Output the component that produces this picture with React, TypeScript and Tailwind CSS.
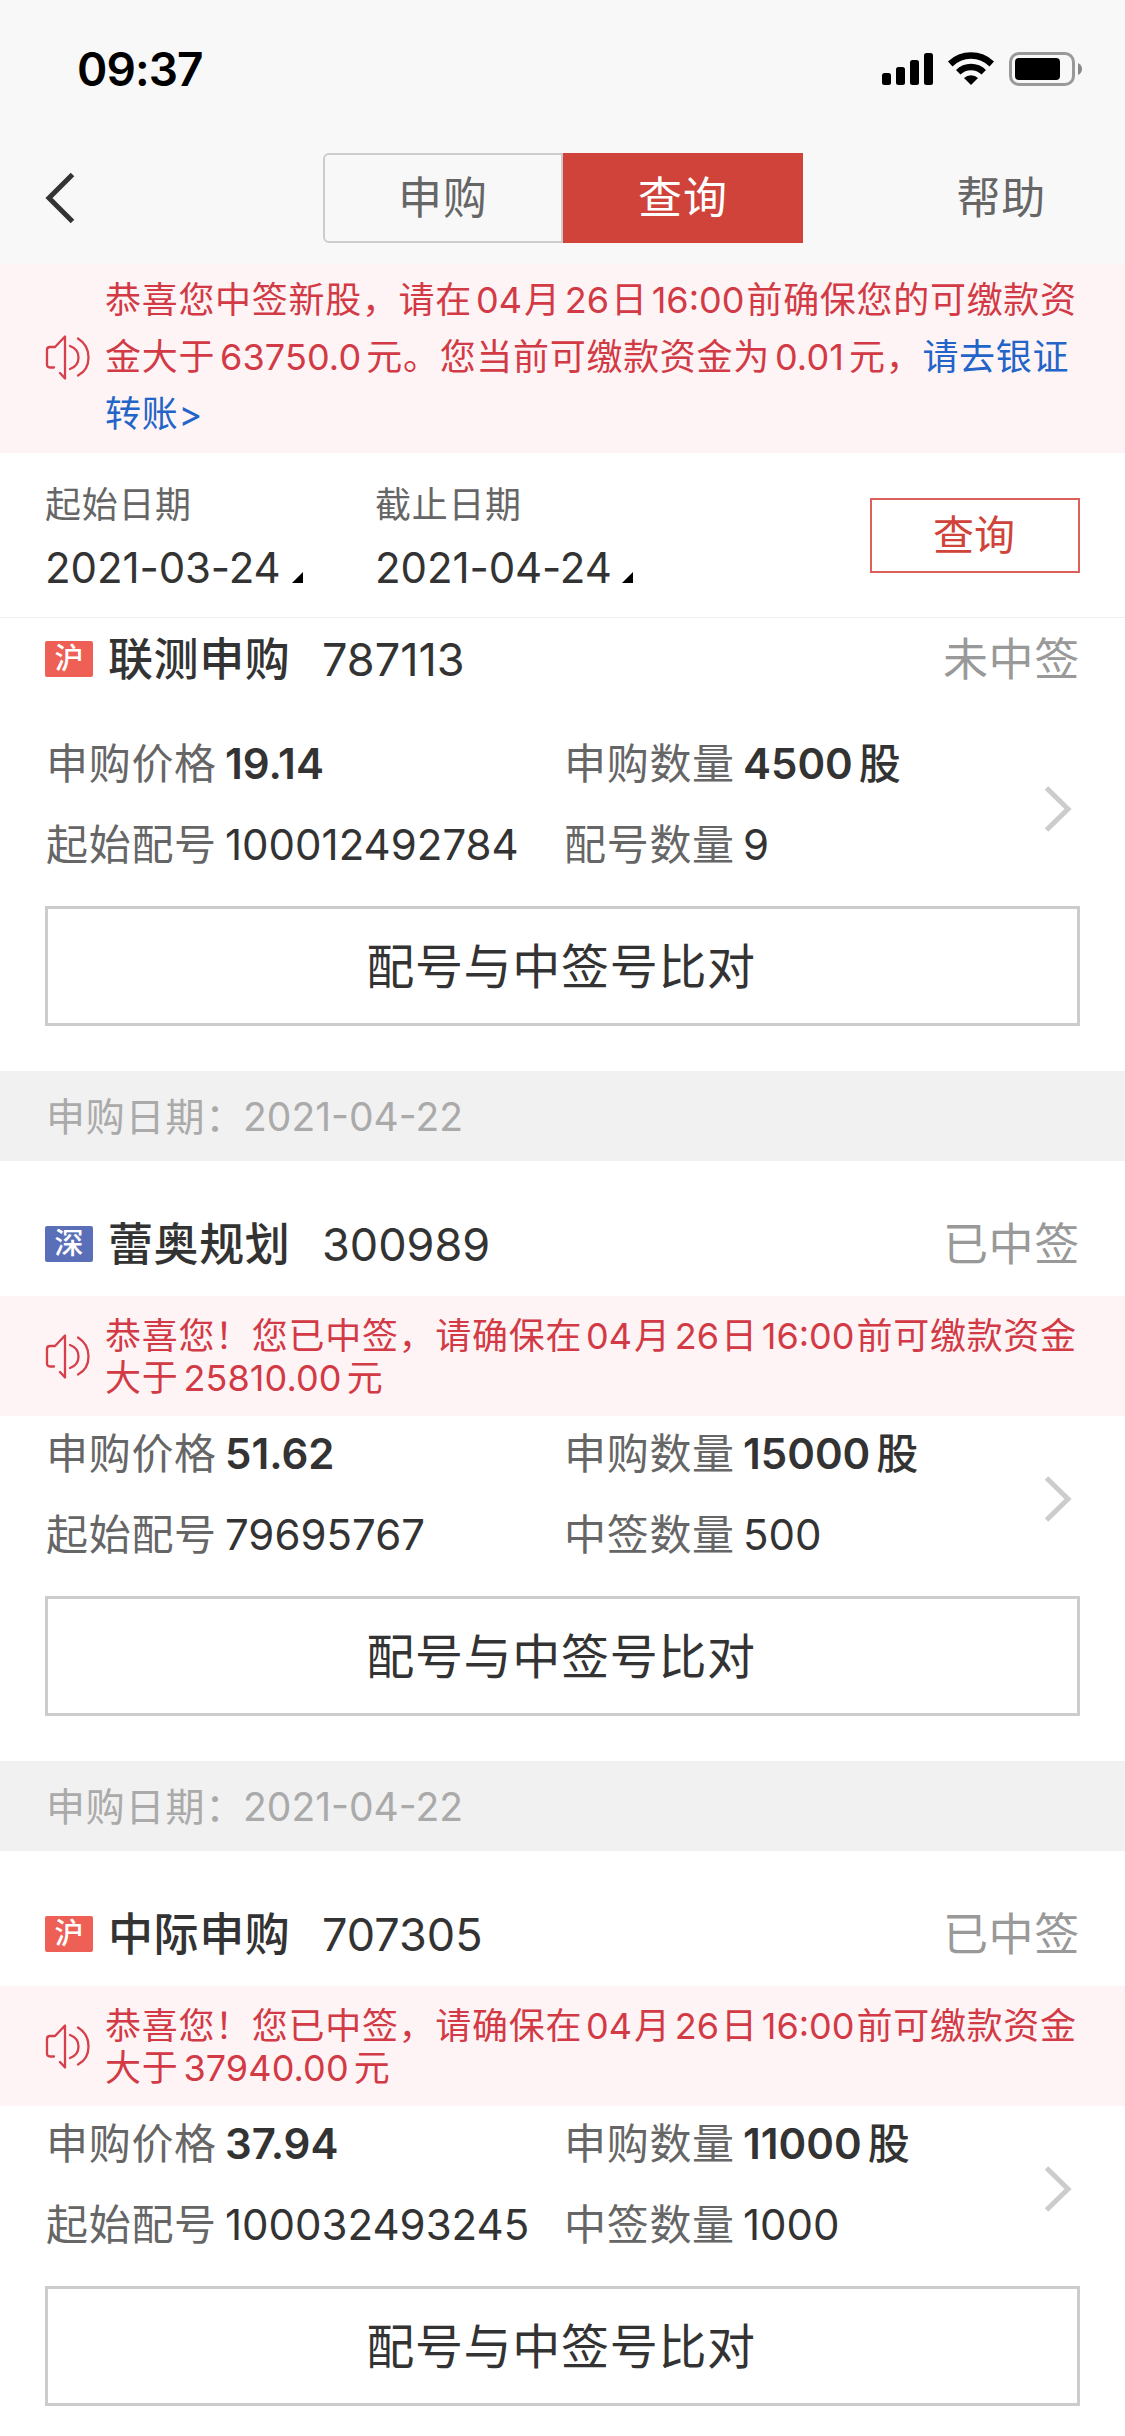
import React from "react";

interface Issue {
  market: "沪" | "深";
  name: string;
  code: string;
  status: string;
  notice?: string[];
  price: string;
  amount: string;
  startNo: string;
  countLabel: string;
  count: string;
  date?: string;
}

const issues: Issue[] = [
  {
    market: "沪",
    name: "联测申购",
    code: "787113",
    status: "未中签",
    price: "19.14",
    amount: "4500",
    startNo: "100012492784",
    countLabel: "配号数量",
    count: "9",
  },
  {
    market: "深",
    name: "蕾奥规划",
    code: "300989",
    status: "已中签",
    notice: [
      "恭喜您！您已中签，请确保在04月26日16:00前可缴款资金",
      "大于25810.00元",
    ],
    price: "51.62",
    amount: "15000",
    startNo: "79695767",
    countLabel: "中签数量",
    count: "500",
    date: "2021-04-22",
  },
  {
    market: "沪",
    name: "中际申购",
    code: "707305",
    status: "已中签",
    notice: [
      "恭喜您！您已中签，请确保在04月26日16:00前可缴款资金",
      "大于37940.00元",
    ],
    price: "37.94",
    amount: "11000",
    startNo: "100032493245",
    countLabel: "中签数量",
    count: "1000",
    date: "2021-04-22",
  },
];

// numbers get a little air on both sides when they sit inside chinese text,
// amounts a bit more than dates
const Mixed = ({ text }: { text: string }) => (
  <>
    {text.split(/([\d.:]+)/).map((part, i) =>
      i % 2 === 1 ? (
        <span
          key={i}
          className={
            part.includes(".")
              ? "ml-[5px] mr-[5px] tracking-[0.1px]"
              : "ml-[4px] mr-[2px] tracking-normal"
          }
        >
          {part}
        </span>
      ) : (
        part
      )
    )}
  </>
);

const Speaker = () => (
  <svg
    className="w-[45px] h-[45px] shrink-0"
    viewBox="0 0 45 45"
    fill="none"
    stroke="#d5404b"
    strokeWidth="2.300"
    strokeLinecap="round"
    strokeLinejoin="round"
  >
    <path d="M9 32.500H5Q2 32.500 2 29.500V15Q2 12 5 12H10L20 1.500V43.500L15 38" />
    <path d="M25 11Q33.500 14 33.500 22.500T25 34" />
    <path d="M33 3.500Q43.500 10 43.500 22.500T33 40.500" />
  </svg>
);

const StatusBar = () => (
  <div className="h-[138px] pl-[77px] pr-[42px] flex items-center justify-between">
    <span className="text-[46px] leading-none font-semibold text-black tracking-[-0.9px]">
      09:37
    </span>
    <svg className="w-[201px] h-[34px]" viewBox="0 0 201 34">
      <rect x="0" y="21" width="9" height="12" rx="2.500" />
      <rect x="14" y="15" width="9" height="18" rx="2.500" />
      <rect x="28" y="8" width="9" height="25" rx="2.500" />
      <rect x="42" y="1" width="9" height="32" rx="2.500" />
      <path d="M66 9.500A33 33 0 0 1 112 9.500L107.500 14.500A26 26 0 0 0 70.500 14.500Z" />
      <path d="M74 18A21 21 0 0 1 104 18L99.500 22.500A15 15 0 0 0 78.500 22.500Z" />
      <path d="M82 26A10 10 0 0 1 96 26L89 33Z" />
      <rect
        x="128.500"
        y="1.500"
        width="63"
        height="31"
        rx="8.500"
        fill="none"
        stroke="#999"
        strokeWidth="3"
      />
      <rect x="133" y="6" width="45" height="22" rx="4" />
      <path d="M196 11Q200 13 200 17T196 23Z" fill="#888" />
    </svg>
  </div>
);

const NavBar = () => (
  <div className="h-[126px] pt-[15px] pl-[45px] pr-[79px] flex justify-between items-start">
    <div className="w-[278px] h-[90px] flex items-center">
      <svg
        className="w-[30px] h-[52px]"
        viewBox="0 0 30 52"
        fill="none"
        stroke="#333"
        strokeWidth="5"
      >
        <path d="M27.500 2.500L4 26L27.500 49.500" />
      </svg>
    </div>
    <div className="flex w-[480px] h-[90px] text-[44px] tracking-[1px] text-center">
      <div className="w-[240px] border-2 border-[#ccc] rounded-l-[6px] text-[#666] leading-[87px]">
        申购
      </div>
      <div className="w-[240px] bg-[#cf433a] text-white leading-[91px]">
        查询
      </div>
    </div>
    <div className="w-[243px] text-right text-[44px] leading-[91px] tracking-[0.7px] text-[#666]">
      帮助
    </div>
  </div>
);

const DateField = ({ label, value }: { label: string; value: string }) => (
  <div className="w-[330px]">
    <div className="text-[36px] leading-[50px] tracking-[0.7px] text-[#666]">
      {label}
    </div>
    <div className="mt-[8px] flex items-end text-[42px] leading-[60px] text-[#333]">
      <span className="w-[247px] tracking-[-0.1px]">{value}</span>
      <svg className="w-[11px] h-[11px] mb-[15px]" viewBox="0 0 11 11">
        <path d="M11 0V11H0Z" />
      </svg>
    </div>
  </div>
);

const Field = ({
  label,
  children,
}: {
  label: string;
  children: React.ReactNode;
}) => (
  <div className="flex whitespace-nowrap text-[42px] leading-[60px]">
    <span className="w-[180px] pl-px text-[#666] tracking-[0.7px]">
      {label}
    </span>
    <span className="text-[#333]">{children}</span>
  </div>
);

const IssueCard = ({ issue }: { issue: Issue }) => (
  <section>
    {issue.date && (
      <div className="h-[90px] pl-[46px] bg-[#f1f1f1] text-[39px] leading-[91px] text-[#aaa] flex whitespace-nowrap">
        <span className="w-[197px] tracking-[0.8px]">申购日期：</span>
        <span>{issue.date}</span>
      </div>
    )}
    <div
      className={`px-[45px] flex items-center text-[45px] leading-[64px] ${
        issue.date ? "h-[135px] pt-[31px]" : "h-[108px] pb-[26px]"
      }`}
    >
      <span
        className={`w-[48px] h-[36px] rounded-[2px] text-center text-[29px] font-medium leading-[36px] text-white ${
          issue.market === "沪" ? "bg-[#ee6055]" : "bg-[#5a6fb8]"
        }`}
      >
        {issue.market}
      </span>
      <span className="ml-[15px] pt-[2px] w-[214px] font-medium text-[#333] tracking-[0.6px]">
        {issue.name}
      </span>
      <span className="pt-[2px] text-[#333]">{issue.code}</span>
      <span className="ml-auto pt-[2px] text-[#999] tracking-[0.7px]">
        {issue.status}
      </span>
    </div>
    {issue.notice && (
      <div className="h-[120px] pl-[45px] flex items-center bg-[#fef4f5] text-[#d23a45]">
        <Speaker />
        <div className="ml-[15px] pt-px text-[36px] leading-[42px] tracking-[0.7px] whitespace-nowrap">
          {issue.notice.map((line) => (
            <p key={line}>
              <Mixed text={line} />
            </p>
          ))}
        </div>
      </div>
    )}
    <div className="px-[45px] pt-[8px] pb-[45px]">
      <div className="flex items-center justify-between pr-[8px]">
        <div className="grid grid-cols-[518px_auto] gap-y-[21px]">
          <Field label="申购价格">
            <b className="font-semibold">{issue.price}</b>
          </Field>
          <Field label="申购数量">
            <b className="font-semibold">{issue.amount}</b>
            <b className="ml-[6px] font-medium">股</b>
          </Field>
          <Field label="起始配号">{issue.startNo}</Field>
          <Field label={issue.countLabel}>{issue.count}</Field>
        </div>
        <svg
          className="w-[28px] h-[46px] mt-[9px]"
          viewBox="0 0 28 46"
          fill="none"
          stroke="#ccc"
          strokeWidth="5"
        >
          <path d="M2.500 2L24 23L2.500 44" />
        </svg>
      </div>
      <div className="mt-[31px] h-[120px] pr-[3px] border-[3px] border-[#ccc] text-center text-[48px] leading-[115px] tracking-[0.7px] text-[#333]">
        配号与中签号比对
      </div>
    </div>
  </section>
);

const App: React.FC = () => {
  return (
    <main className="w-[1125px] h-[2436px] overflow-hidden bg-white font-['Inter','Noto_Sans_CJK_SC',sans-serif]">
      <header className="bg-[#f8f8f8]">
        <StatusBar />
        <NavBar />
      </header>
      <div className="h-[189px] pl-[45px] pb-[3px] flex items-center bg-[#fef4f5] text-[#d23a45]">
        <Speaker />
        <div className="ml-[15px] text-[36px] leading-[57px] tracking-[0.7px] whitespace-nowrap">
          <p>
            <Mixed text="恭喜您中签新股，请在04月26日16:00前确保您的可缴款资" />
          </p>
          <p>
            <Mixed text="金大于63750.0元。您当前可缴款资金为0.01元，" />
            <a className="text-[#2264c8]">请去银证</a>
          </p>
          <p className="text-[#2264c8]">转账&gt;</p>
        </div>
      </div>
      <div className="h-[165px] px-[45px] pt-[27px] flex border-b border-[#eee]">
        <DateField label="起始日期" value="2021-03-24" />
        <DateField label="截止日期" value="2021-04-24" />
        <div className="ml-auto mt-[18px] w-[210px] h-[75px] pr-[2px] border-2 border-[#dc615b] text-center text-[41px] leading-[71px] text-[#cf433a]">
          查询
        </div>
      </div>
      {issues.map((issue) => (
        <IssueCard key={issue.code} issue={issue} />
      ))}
    </main>
  );
};

export default App;
